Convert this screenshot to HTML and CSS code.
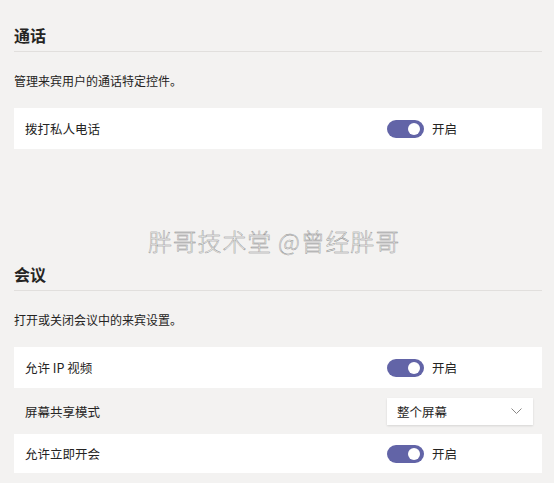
FILE: index.html
```html
<!DOCTYPE html>
<html lang="zh-CN">
<head>
    <meta charset="UTF-8">
    <meta name="viewport" content="width=device-width, initial-scale=1.0">
    <title>来宾访问</title>
    <link rel="stylesheet" href="styles.css">
</head>
<body>

    <div class="settings-page">
        <section class="section section-calls">
            <h2>通话</h2>
            <p class="desc">管理来宾用户的通话特定控件。</p>
            <div class="setting-row">
                <span class="setting-label">拨打私人电话</span>
                <div class="setting-control">
                    <span class="toggle on"></span>
                    <span class="toggle-text">开启</span>
                </div>
            </div>
        </section>

        <section class="section section-meetings">
            <h2>会议</h2>
            <p class="desc">打开或关闭会议中的来宾设置。</p>
            <div class="setting-row">
                <span class="setting-label">允许 IP 视频</span>
                <div class="setting-control">
                    <span class="toggle on"></span>
                    <span class="toggle-text">开启</span>
                </div>
            </div>
            <div class="setting-row plain">
                <span class="setting-label">屏幕共享模式</span>
                <div class="setting-control">
                    <div class="dropdown">
                        <span>整个屏幕</span>
                        <svg class="chevron" width="11" height="6" viewBox="0 0 11 6">
                            <path d="M0.5 0.5 L5.5 5.5 L10.5 0.5" fill="none" stroke="#8a8886" stroke-width="1"/>
                        </svg>
                    </div>
                </div>
            </div>
            <div class="setting-row last">
                <span class="setting-label">允许立即开会</span>
                <div class="setting-control">
                    <span class="toggle on"></span>
                    <span class="toggle-text">开启</span>
                </div>
            </div>
        </section>

        <div class="watermark">胖哥技术堂 @曾经胖哥</div>
    </div>

</body>
</html>
```

FILE: styles.css
```css
/* Page */
body {
    margin: 0;
    padding: 0;
    background: #f3f2f1;
    color: #252423;
    font-family: "Noto Sans CJK SC", "Noto Sans", sans-serif;
    font-size: 12.5px;
}

.settings-page {
    position: relative;
    padding: 25px 12px 0 14px;
}

/* Sections */
.section h2 {
    margin: 0;
    font-size: 16px;
    line-height: 20px;
    font-weight: bold;
    padding-bottom: 6px;
    border-bottom: 1px solid #e1dfdd;
}

.section-meetings {
    margin-top: 115px;
}

.desc {
    margin: 21px 0 19px;
    line-height: 16px;
    font-size: 12px;
}

/* Rows */
.setting-row {
    display: grid;
    grid-template-columns: 1fr 146px;
    align-items: center;
    height: 41px;
    padding: 0 9px 0 11px;
    background: #fff;
}

.setting-row.plain {
    height: 46px;
    background: transparent;
}

.setting-row.last {
    height: 39px;
}

.setting-control {
    display: flex;
    align-items: center;
    gap: 8px;
}

/* Toggle */
.toggle {
    position: relative;
    width: 37px;
    height: 18px;
    border-radius: 9px;
    background: #6264a7;
}

.toggle.on::after {
    content: "";
    position: absolute;
    top: 3px;
    right: 4px;
    width: 12px;
    height: 12px;
    border-radius: 50%;
    background: #fff;
}

.toggle-text {
    line-height: 16px;
}

/* Dropdown */
.dropdown {
    flex: 1;
    display: flex;
    align-items: center;
    justify-content: space-between;
    height: 27px;
    padding: 0 11px 0 10px;
    background: #fff;
    box-shadow: 0 1px 2px rgba(0, 0, 0, 0.12);
}

/* Watermark */
.watermark {
    position: absolute;
    left: 148px;
    top: 227px;
    font-size: 24px;
    line-height: 28px;
    font-weight: 300;
    letter-spacing: 0.8px;
    color: #f2f2f2;
    -webkit-text-stroke: 0.4px #8a8a8a;
    pointer-events: none;
}
```
